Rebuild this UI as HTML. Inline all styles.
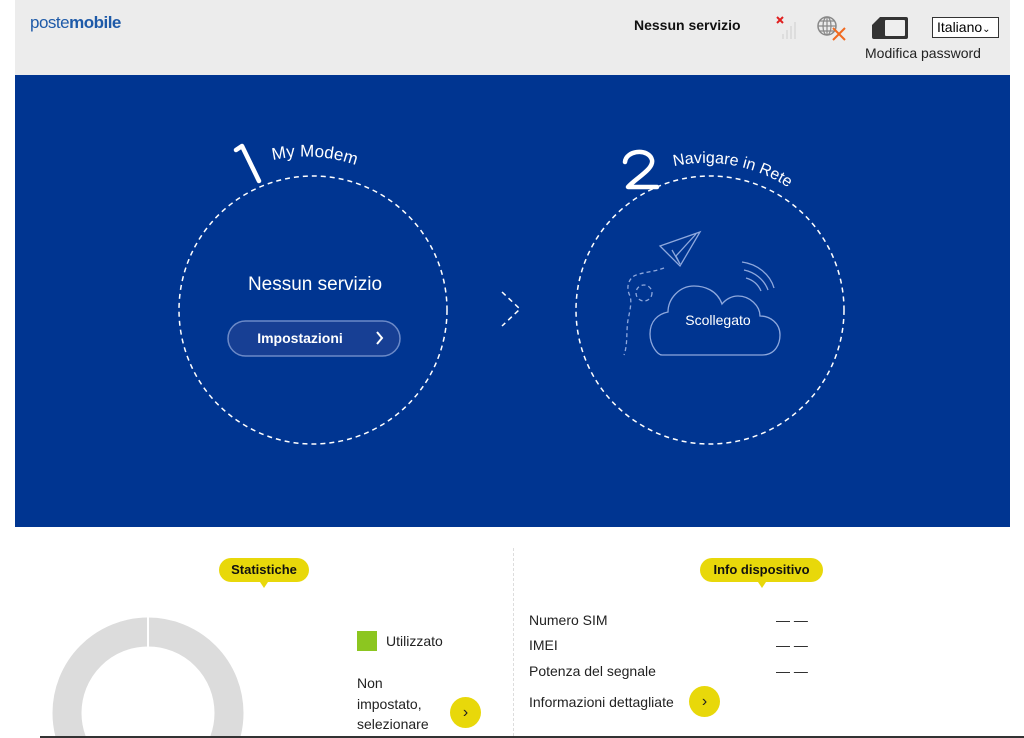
<!DOCTYPE html>
<html><head><meta charset="utf-8"><style>
*{margin:0;padding:0;box-sizing:border-box}
html,body{width:1024px;height:738px;overflow:hidden}
body{background:#fff;font-family:"Liberation Sans",Arial,sans-serif;position:relative}
.hdr{position:absolute;left:15px;top:0;width:995px;height:75px;background:#ececec}
.blue{position:absolute;left:15px;top:75px;width:995px;height:452px;background:#003591}
.abs{position:absolute}
.tag{position:absolute;background:#e8d80a;border-radius:12px;height:24px;font-weight:bold;font-size:13px;line-height:24px;text-align:center;color:#111}
.tag:after{content:"";position:absolute;left:50%;margin-left:-4px;bottom:-6px;border:4px solid transparent;border-top:4px solid #e8d80a;border-bottom:none;border-top-width:6px}
.ybtn{position:absolute;width:31px;height:31px;border-radius:50%;background:#e8d80a;color:#222;font-size:16px;text-align:center;line-height:31px}
.t14{font-size:14px;color:#222}
</style></head><body>
<div class="hdr"></div>
<div class="abs" style="left:30px;top:13px;font-size:17px;color:#1e5aa8;letter-spacing:-0.5px">poste<b>mobile</b></div>
<div class="abs" style="left:634px;top:17px;font-size:14px;font-weight:bold;color:#111">Nessun servizio</div>
<svg class="abs" style="left:772px;top:14px" width="30" height="28">
<path d="M5 3l6 6M11 3l-6 6" stroke="#e02020" stroke-width="2"/>
<g fill="#ddd"><rect x="10" y="20" width="2" height="5"/><rect x="14" y="16" width="2" height="9"/><rect x="18" y="12" width="2" height="13"/><rect x="22" y="8" width="2" height="17"/></g></svg>
<svg class="abs" style="left:816px;top:14px" width="32" height="28">
<circle cx="11" cy="12" r="9" fill="none" stroke="#888" stroke-width="1.5"/><path d="M2 12h18M11 3v18M4 7h14M4 17h14" stroke="#888" stroke-width="1.2"/><ellipse cx="11" cy="12" rx="4" ry="9" fill="none" stroke="#888" stroke-width="1.2"/>
<path d="M17 14l12 12M29 14l-12 12" stroke="#f06a20" stroke-width="2"/></svg>
<svg class="abs" style="left:870px;top:15px" width="40" height="26"><path d="M10 2h26a2 2 0 0 1 2 2v18a2 2 0 0 1-2 2H4a2 2 0 0 1-2-2V10z" fill="#333"/><rect x="15" y="5" width="20" height="16" rx="1" fill="#eee"/></svg>
<div class="abs" style="left:932px;top:17px;width:67px;height:21px;border:1px solid #333;background:#fff;font-size:14px;line-height:19px;padding-left:4px">Italiano<span style="font-size:10px">&#8964;</span></div>
<div class="abs" style="left:865px;top:45px;font-size:14px;color:#222">Modifica password</div>
<div class="blue"></div>
<svg class="abs" style="left:0;top:0" width="1024" height="530">
<defs><path id="a1" d="M225 180 A150 150 0 0 1 400 190"/><path id="a2" d="M640 178 A150 150 0 0 1 810 205"/></defs>
<circle cx="313" cy="310" r="134" fill="none" stroke="#fff" stroke-width="1.5" stroke-dasharray="5 4"/>
<circle cx="710" cy="310" r="134" fill="none" stroke="#fff" stroke-width="1.5" stroke-dasharray="5 4"/>
<path d="M236 150l6-4l17 35" fill="none" stroke="#fff" stroke-width="4.5" stroke-linecap="round" stroke-linejoin="round"/>
<text font-size="17" fill="#fff" font-family="Liberation Sans,sans-serif"><textPath href="#a1" startOffset="52">My Modem</textPath></text>
<path d="M625 162c1-12 24-14 27-2c2 9-16 18-24 27h29" fill="none" stroke="#fff" stroke-width="4.5" stroke-linecap="round" stroke-linejoin="round"/>
<text font-size="16" fill="#fff" font-family="Liberation Sans,sans-serif"><textPath href="#a2" startOffset="36">Navigare in Rete</textPath></text>
<path d="M502 292l18 17l-18 17" fill="none" stroke="#fff" stroke-width="1.5" stroke-dasharray="5 4"/>
<rect x="228" y="321" width="172" height="35" rx="17.5" fill="#173f94" stroke="#6c8ac8" stroke-width="1.5"/>
<text x="300" y="343" fill="#fff" font-size="14" font-weight="bold" text-anchor="middle" font-family="Liberation Sans,sans-serif">Impostazioni</text>
<path d="M377 332l5 6l-5 6" fill="none" stroke="#fff" stroke-width="2"/>
<text x="315" y="290" fill="#fff" font-size="19" text-anchor="middle" font-family="Liberation Sans,sans-serif">Nessun servizio</text>
<g fill="none" stroke="#8ea8dd" stroke-width="1.3">
<path d="M662 355h100c14 0 18-12 18-20c0-12-10-19-20-19c0-10-10-20-22-20c-6 0-12 3-16 8c-5-14-18-18-28-18c-15 0-26 13-26 26c-10 2-18 9-18 22c0 12 8 21 12 21z"/>
<path d="M660 246l40-14l-20 34zM672 250l8 14l-4-8l20-22"/>
<path d="M742 262c15 2 28 12 32 26M744 270c10 2 20 9 24 20M746 278c7 2 12 6 15 13"/>
<path d="M664 268c-10 4-22 4-30 8c-6 4-8 12-4 20c2 6 0 14-2 24c-2 12 0 24-4 35" stroke-dasharray="4 3"/>
<circle cx="644" cy="293" r="8" stroke-dasharray="4 3"/>
</g>
<text x="718" y="325" fill="#fff" font-size="14" text-anchor="middle" font-family="Liberation Sans,sans-serif">Scollegato</text>
</svg>
<div class="tag" style="left:219px;top:558px;width:90px">Statistiche</div>
<div class="tag" style="left:700px;top:558px;width:123px">Info dispositivo</div>
<div class="abs" style="left:513px;top:548px;height:188px;border-left:1px dashed #ddd"></div>
<svg class="abs" style="left:40px;top:605px" width="230" height="131"><circle cx="108" cy="108" r="81" fill="none" stroke="#dcdcdc" stroke-width="29"/><rect x="107" y="10" width="2" height="35" fill="#fff"/></svg>
<div class="abs" style="left:357px;top:631px;width:20px;height:20px;background:#8cc620"></div>
<div class="abs t14" style="left:386px;top:633px">Utilizzato</div>
<div class="abs t14" style="left:357px;top:673px;line-height:20.5px;height:63px;overflow:hidden">Non<br>impostato,<br>selezionare</div>
<div class="ybtn" style="left:450px;top:697px">&#8250;</div>
<div class="abs t14" style="left:529px;top:612px">Numero SIM</div>
<div class="abs t14" style="left:529px;top:637px">IMEI</div>
<div class="abs t14" style="left:529px;top:663px">Potenza del segnale</div>
<div class="abs t14" style="left:529px;top:694px">Informazioni dettagliate</div>
<div class="abs t14" style="left:776px;top:612px">— —</div>
<div class="abs t14" style="left:776px;top:637px">— —</div>
<div class="abs t14" style="left:776px;top:663px">— —</div>
<div class="ybtn" style="left:689px;top:686px">&#8250;</div>
<div class="abs" style="left:40px;top:736px;width:984px;height:2px;background:#333"></div>
</body></html>
